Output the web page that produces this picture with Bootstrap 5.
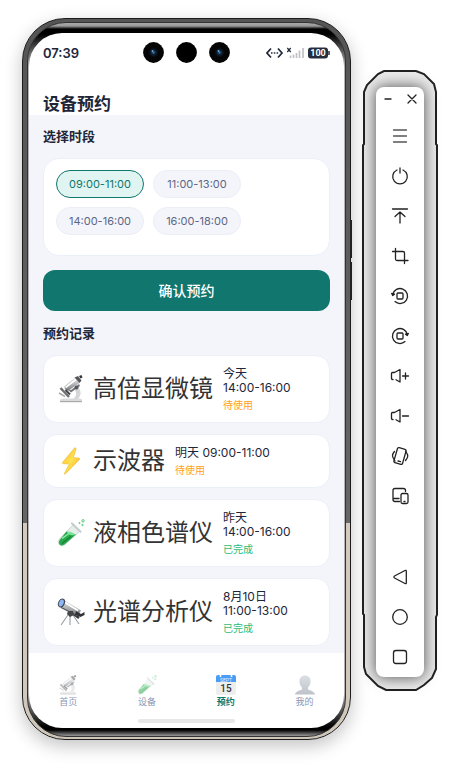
<!DOCTYPE html>
<html lang="zh-CN">
<head>
<meta charset="utf-8">
<meta name="viewport" content="width=device-width, initial-scale=1">
<title>设备预约</title>
<link rel="stylesheet" href="https://cdn.jsdelivr.net/npm/bootstrap@5.3.0/dist/css/bootstrap.min.css">
<style>
body{background:#fff;font-family:Inter,"Noto Sans CJK SC",sans-serif;color:#1e2638}
.stage{padding:18px 33px 27px 22px;gap:11px}
.phone{min-width:0;border:1px solid #1d1d1d;border-radius:43px;padding:3px 4px 2px;
  background:linear-gradient(#555 0,#666 70%,#d3cabd 70%,#cfc7ba 100%);
  box-shadow:0 6px 18px rgba(0,0,0,.24)}
.bezel{border:1px solid #333;border-radius:39px;padding:10px 1px 8px;
  background:linear-gradient(#aaa 0,#999 3px,#000 6px,#000 11px,rgba(0,0,0,0) 44px,rgba(0,0,0,0) calc(100% - 44px),#000 calc(100% - 9px),#000 calc(100% - 6px),#999 100%),#b4b4b6}
.screen{border-radius:33px;background:#fff;overflow:hidden}
.side-key{right:-2px;width:2px;height:38px;background:#222}
.key-a{top:201px}.key-b{top:243px}
.status-row{display:grid;grid-template-columns:1fr auto 1fr;height:39px;padding:0 14px}
.clock{font-size:13px;line-height:20px;font-weight:600}
.lens{gap:12px}
.page-title{font-size:17px;line-height:22px;font-weight:700;padding:21px 14px 0}
.content{background:#f3f5fb;padding:11px 14px 7px}
.sec-title{font-size:13px;line-height:20px;font-weight:700;margin:0}
.panel-box{background:#fff;border:1px solid #ebeff8;border-radius:16px}
.slots{margin-top:12px;padding:11px 12px 20px;gap:9px}
.slot{width:88px;height:28px;border-radius:14px;border:1px solid #ebeef7;background:#f3f5fb;color:#5d6685;font-size:11px;line-height:26px;padding:0;text-align:center;cursor:pointer}
.btn-check:checked+.slot{background:#e0f4f1;border-color:#11776e;color:#11776e}
.confirm{margin:14px 0 12px;height:41px;border:0;border-radius:12px;background:#11776e;color:#fff;font-size:14px;line-height:20px;font-weight:500}
.confirm:hover{background:#0d655e}
.records{margin-top:12px;gap:11px}
.record{padding:11px 13px;border-radius:14px}
.emoji{width:28px;height:28px;flex:none}
.dev{font-size:24px;line-height:28px;color:#333;margin-left:8px;white-space:nowrap}
.when{font-size:12px;line-height:14px;margin-left:10px}
.state{font-size:10px;line-height:12px;margin-top:4px}
.wait{color:#ff9f1c}.done{color:#2dbd75}
.tabs{padding-top:22px}
.tab{flex:1;font-size:9px;line-height:12px;color:#8d96b3;text-decoration:none;gap:1px}
.tab svg{width:20px;height:20px;opacity:.5}
.tab.current{color:#11776e;font-weight:700}
.tab.current svg{opacity:1}
.home-bar{width:97px;height:4px;border-radius:2px;background:#e8e8e8;margin:11px auto 5px}
.tool-shell{width:76px;margin-top:52px;padding:17px 14px 14px;height:max-content}
.shell-line{left:0;top:0;width:100%;height:100%}
.tools{background:#fff;border-radius:8px;box-shadow:0 0 14px 1px rgba(0,0,0,.6)}
.tools button{border:0;background:none;padding:0;color:#222;height:40px;line-height:0}
.tools .win{height:24px}
.tools .win-row{margin-bottom:5px}
.tools .nav-start{margin-top:41px}
.ic{fill:none;stroke:currentColor;stroke-width:1.3;stroke-linecap:round;stroke-linejoin:round}
</style>
<script src="https://cdn.jsdelivr.net/npm/bootstrap@5.3.0/dist/js/bootstrap.bundle.min.js"></script>
</head>
<body>
<svg width="0" height="0" class="position-absolute" aria-hidden="true">
<defs>
<linearGradient id="metal" x1="0" y1="0" x2="0" y2="1"><stop offset="0" stop-color="#f4f4f4"/><stop offset="1" stop-color="#77797c"/></linearGradient>
<linearGradient id="bolt" x1="0" y1="0" x2="1" y2="1"><stop offset="0" stop-color="#f7b92c"/><stop offset=".5" stop-color="#ffe252"/><stop offset="1" stop-color="#f3a91f"/></linearGradient>
<linearGradient id="person" x1="0" y1="0" x2="0" y2="1"><stop offset="0" stop-color="#b8c0ca"/><stop offset="1" stop-color="#7e8896"/></linearGradient>
<radialGradient id="glass"><stop offset="0" stop-color="#4b8bc2"/><stop offset=".25" stop-color="#16304d"/><stop offset=".6" stop-color="#0a1019"/><stop offset="1" stop-color="#000"/></radialGradient>
<symbol id="scope" viewBox="0 0 28 28">
<path d="M19 11c6 3 6 10 1 14h-5c5-3 5-8 2-11z" fill="#d5d6d8"/>
<path d="M3 24.5l3-1h17l2 1V27H3z" fill="#d9dadc"/><path d="M3 26h22v1.200H3z" fill="#aaa"/>
<path d="M7.500 11.500L18 2.500l4.500 5.500-11 7.500q-4 .5-4-4z" fill="url(#metal)"/>
<path d="M8.500 12.500L19.500 4" stroke="#fff" stroke-width="1.600"/>
<path d="M17.500 2.500l3.500-1.500 3.500 4.500-2 2.500z" fill="#55575b"/><path d="M22 1l2.500-1 1 2.500-2 1z" fill="#303236"/>
<path d="M10 14l4 1 8-6 1 2-9 6.500z" fill="#77797d"/>
<circle cx="19.500" cy="12.500" r="2" fill="#55585d"/>
<path d="M3.500 13l8.500 9" stroke="#6e7074" stroke-width="2.500"/><path d="M8.500 15l4.500 4.500" stroke="#44464a" stroke-width="2"/>
<path d="M2 18l6 3.500" stroke="#aaa" stroke-width="1.500"/>
</symbol>
<symbol id="zap" viewBox="0 0 28 28">
<path d="M17.500 1L5.500 15.500q-.5 1 .8 1.200l6 .3-4.800 9.200q-.3 1.500 1 .6L22.500 12.500q.8-1.200-.6-1.400l-5.600-.4 2.700-8.700q0-1.800-1.500-1z" fill="url(#bolt)" stroke="#efb326" stroke-width=".6"/>
</symbol>
<symbol id="tube" viewBox="0 0 28 28">
<path d="M16 6l6.500 6.500L8 25.500q-4 2.500-6-.2-1.800-2.500.8-5.800z" fill="#e5eeea" stroke="#b5c4bf" stroke-width=".6"/>
<path d="M9.500 12.500L19 15.500 7.500 25.500q-3.500 2-5-.3t.8-5z" fill="#28a94c"/>
<path d="M9.500 12.500q4-.5 9.500 3l-3 .8q-5-.2-6.500-3.800z" fill="#7ce39b"/>
<path d="M5 19.500l7-5" stroke="#8df0a7" stroke-width="1.500"/><path d="M5 24.500l9-7" stroke="#118335" stroke-width="1.200"/>
<path d="M15 4.500l8.500 8.200" stroke="#c5cecb" stroke-width="2.200" stroke-linecap="round"/>
<g fill="none" stroke="#52c975"><circle cx="26" cy="1.800" r="1.200"/><circle cx="22.500" cy="4" r=".6"/><circle cx="25.500" cy="6" r=".7"/></g>
</symbol>
<symbol id="tele" viewBox="0 0 28 28">
<path d="M13 14L4 27M13 14v13M14 14l8 12" stroke="#999b9e" stroke-width="1.100"/>
<path d="M14 14l8 6" stroke="#35373a" stroke-width="2.400"/>
<path d="M4.500 .5L24 12.500 21 18 2.500 9z" fill="url(#metal)"/>
<path d="M8 4.500l13 8" stroke="#fff" stroke-width="1.800"/><path d="M4 9.500l16 8" stroke="#55575b" stroke-width="1.200"/>
<ellipse cx="4.500" cy="5" rx="3.300" ry="4.700" transform="rotate(25 4.500 5)" fill="#454b5c"/>
<ellipse cx="4.300" cy="5" rx="2.200" ry="3.500" transform="rotate(25 4.300 5)" fill="#8db8f2"/>
<path d="M19 13l5 3 3.500-2v3l-4 2-5.500-2.500z" fill="#303236"/>
<path d="M11 13h5l1 4-4 2-3-3z" fill="#44464a"/>
</symbol>
<symbol id="cal" viewBox="0 0 20 20">
<rect width="20" height="20" rx="2" fill="#eeeeef"/><path d="M0 7V2q0-2 2-2h16q2 0 2 2v5z" fill="#4b9cf5"/>
<path d="M4.500 0v2M15.500 0v2" stroke="#fff" stroke-width="1.600"/>
<text x="10" y="6.500" font-size="5" text-anchor="middle" fill="#e6f1ff" font-family="Roboto,sans-serif" font-weight="400">SEPT</text>
<text x="10" y="17" font-size="10" text-anchor="middle" fill="#333" font-family="Roboto,sans-serif" font-weight="500">15</text>
</symbol>
<symbol id="user" viewBox="0 0 20 20"><path d="M10 .5c3.600 0 5.600 2.500 5.600 6 0 2.500-1.200 4.700-2.600 6v1.500c.2 1.500 6.500 1.500 7 5.500H0c.5-4 6.800-4 7-5.500v-1.500c-1.400-1.300-2.600-3.500-2.600-6 0-3.500 2-6 5.600-6z" fill="url(#person)"/></symbol>
<symbol id="cam" viewBox="0 0 21 21"><circle cx="10.500" cy="10.500" r="10.400" fill="#050506"/><circle cx="10.500" cy="10.500" r="6" fill="url(#glass)"/><circle cx="9.500" cy="9" r=".9" fill="#69a8e3"/></symbol>
</defs>
</svg>

<div class="stage d-flex align-items-start">
<div class="phone position-relative flex-fill">
<span class="side-key key-a position-absolute"></span><span class="side-key key-b position-absolute"></span>
<div class="bezel"><div class="screen">
<header>
<div class="status-row align-items-center">
<span class="clock">07:39</span>
<div class="lens d-flex">
<svg width="21" height="21"><use href="#cam"/></svg>
<svg width="21" height="21"><circle cx="10.500" cy="10.500" r="10.400" fill="#000"/></svg>
<svg width="21" height="21"><use href="#cam"/></svg>
</div>
<svg class="ms-auto" width="64" height="14" viewBox="0 0 64 14" aria-label="100%">
<path d="M5 2.500L1 7l4 4.500M12 2.500L16 7l-4 4.500" fill="none" stroke="#1e2638" stroke-width="1.700"/>
<path d="M5 7h1.500M7.800 7h1.500M10.600 7h1.500" stroke="#1e2638" stroke-width="1.500"/>
<path d="M21.300 2l3.400 4M24.700 2l-3.400 4" stroke="#1e2638" stroke-width="1.200"/>
<path d="M24.500 12V9.500M27.500 12V8.500M30.500 12V7M33.500 12V4.500M37 12V2" stroke="#bfc1c5" stroke-width="1.700"/>
<rect x="42" y="1.500" width="20" height="11" rx="3" fill="#242d3d"/><path d="M63 5v4" stroke="#242d3d" stroke-width="1.500"/>
<text x="52" y="10.300" font-size="9" font-weight="700" text-anchor="middle" fill="#fff" font-family="Roboto,sans-serif">100</text>
</svg>
</div>
<h1 class="page-title m-0">设备预约</h1>
</header>
<main class="content">
<h2 class="sec-title" id="slot-title">选择时段</h2>
<div class="panel-box slots d-flex flex-wrap" role="radiogroup" aria-labelledby="slot-title">
<input class="btn-check" type="radio" name="slot" id="s1" checked><label class="slot" for="s1">09:00-11:00</label>
<input class="btn-check" type="radio" name="slot" id="s2"><label class="slot me-5" for="s2">11:00-13:00</label>
<input class="btn-check" type="radio" name="slot" id="s3"><label class="slot" for="s3">14:00-16:00</label>
<input class="btn-check" type="radio" name="slot" id="s4"><label class="slot" for="s4">16:00-18:00</label>
</div>
<button class="btn confirm w-100 p-0" type="button">确认预约</button>
<h2 class="sec-title">预约记录</h2>
<div class="records d-flex flex-column">
<article class="panel-box record d-flex align-items-center"><svg class="emoji"><use href="#scope"/></svg><span class="dev">高倍显微镜</span><div class="when"><div>今天<br>14:00-16:00</div><div class="state wait">待使用</div></div></article>
<article class="panel-box record d-flex align-items-center"><svg class="emoji"><use href="#zap"/></svg><span class="dev">示波器</span><div class="when"><div>明天 09:00-11:00</div><div class="state wait">待使用</div></div></article>
<article class="panel-box record d-flex align-items-center"><svg class="emoji"><use href="#tube"/></svg><span class="dev">液相色谱仪</span><div class="when"><div>昨天<br>14:00-16:00</div><div class="state done">已完成</div></div></article>
<article class="panel-box record d-flex align-items-center"><svg class="emoji"><use href="#tele"/></svg><span class="dev">光谱分析仪</span><div class="when"><div>8月10日<br>11:00-13:00</div><div class="state done">已完成</div></div></article>
</div>
</main>
<nav class="tabs d-flex">
<a class="tab d-flex flex-column align-items-center" href="#"><svg><use href="#scope"/></svg>首页</a>
<a class="tab d-flex flex-column align-items-center" href="#"><svg><use href="#tube"/></svg>设备</a>
<a class="tab current d-flex flex-column align-items-center" href="#" aria-current="page"><svg><use href="#cal"/></svg>预约</a>
<a class="tab d-flex flex-column align-items-center" href="#"><svg><use href="#user"/></svg>我的</a>
</nav>
<div class="home-bar"></div>
</div></div>
</div>

<aside class="tool-shell position-relative flex-shrink-0">
<svg class="shell-line position-absolute" viewBox="0 0 76 620" preserveAspectRatio="none" aria-hidden="true"><path d="M22 1H54L62 4 72 14 74 22V74L75 75V544L74 546V598L70 607 62 614 54 619H24L16 615 4 603 2 596V544L1 543V75L2 74V22L5 15 16 4z" fill="#eaeaea" stroke="#222" stroke-width="2"/></svg>
<div class="tools position-relative d-flex flex-column">
<div class="win-row d-flex">
<button class="win flex-fill" type="button" aria-label="最小化"><svg class="ic" width="12" height="12"><path d="M3 6h6"/></svg></button>
<button class="win flex-fill" type="button" aria-label="关闭"><svg class="ic" width="12" height="12"><path d="M2 2l8 8M10 2l-8 8"/></svg></button>
</div>
<button type="button" aria-label="菜单"><svg class="ic" width="20" height="20"><path d="M3.500 4h13M3.500 10h13M3.500 16h13" stroke="#555"/></svg></button>
<button type="button" aria-label="电源"><svg class="ic" width="20" height="20"><path d="M7 4a7.300 7.300 0 1 0 6 0M10 2v5"/></svg></button>
<button type="button" aria-label="上滑"><svg class="ic" width="20" height="20"><path d="M2.500 3h15M10 17V6M5 10.500L10 6l5 4.500"/></svg></button>
<button type="button" aria-label="截屏"><svg class="ic" width="20" height="20"><path d="M5.500 2.500V13q0 1.500 1.500 1.500h11M2.500 5.500h10.500q1.500 0 1.500 1.500v10.500"/></svg></button>
<button type="button" aria-label="向左旋转"><svg class="ic" width="20" height="20"><path d="M2.700 8.500A7.500 7.500 0 1 1 5 15.600"/><path d="M1.700 7.500l1 2 1.800-1.300z" fill="currentColor"/><rect x="7" y="7" width="6" height="6" rx="1"/></svg></button>
<button type="button" aria-label="向右旋转"><svg class="ic" width="20" height="20"><path d="M17.300 8.500A7.500 7.500 0 1 0 15 15.600"/><path d="M18.300 7.500l-1 2-1.800-1.300z" fill="currentColor"/><rect x="7" y="7" width="6" height="6" rx="1"/></svg></button>
<button type="button" aria-label="增大音量"><svg class="ic" width="20" height="20"><path d="M3 13.500H2.500q-1 0-1-1v-5q0-1 1-1h2L10 3.500v12.500l-4-2.300M12.500 10h6M15.500 7v6"/></svg></button>
<button type="button" aria-label="减小音量"><svg class="ic" width="20" height="20"><path d="M3 13.500H2.500q-1 0-1-1v-5q0-1 1-1h2L10 3.500v12.500l-4-2.300M12.500 10h6"/></svg></button>
<button type="button" aria-label="摇一摇"><svg class="ic" width="20" height="20"><rect x="5.500" y="2.200" width="9" height="15.600" rx="1.500" transform="rotate(16 10 10)"/><path d="M8 15l2.500.7M4.500 5.500Q1.500 9 3 11.500l2 3.500M15.500 5l2 3.500Q18.500 11 15.500 14.500"/></svg></button>
<button type="button" aria-label="多设备"><svg class="ic" width="20" height="20"><path d="M15.500 5.500V4.500q0-2-2-2H5q-2 0-2 2v9q0 2 2 2h4.500M3 12.500h6"/><rect x="11" y="7.500" width="7" height="10" rx="1.500"/><path d="M14 15.500h1"/></svg></button>
<button class="nav-start" type="button" aria-label="返回"><svg class="ic" width="20" height="20"><path d="M15 3.500q1.300-.6 1.300.8v11.400q0 1.400-1.300.8L4.500 11q-1.200-1 0-2z"/></svg></button>
<button type="button" aria-label="主页"><svg class="ic" width="20" height="20"><circle cx="10" cy="10" r="7.300"/></svg></button>
<button type="button" aria-label="最近任务"><svg class="ic" width="20" height="20"><rect x="3.500" y="3.500" width="13" height="13" rx="2.500"/></svg></button>
</div>
</aside>
</div>
</body>
</html>
